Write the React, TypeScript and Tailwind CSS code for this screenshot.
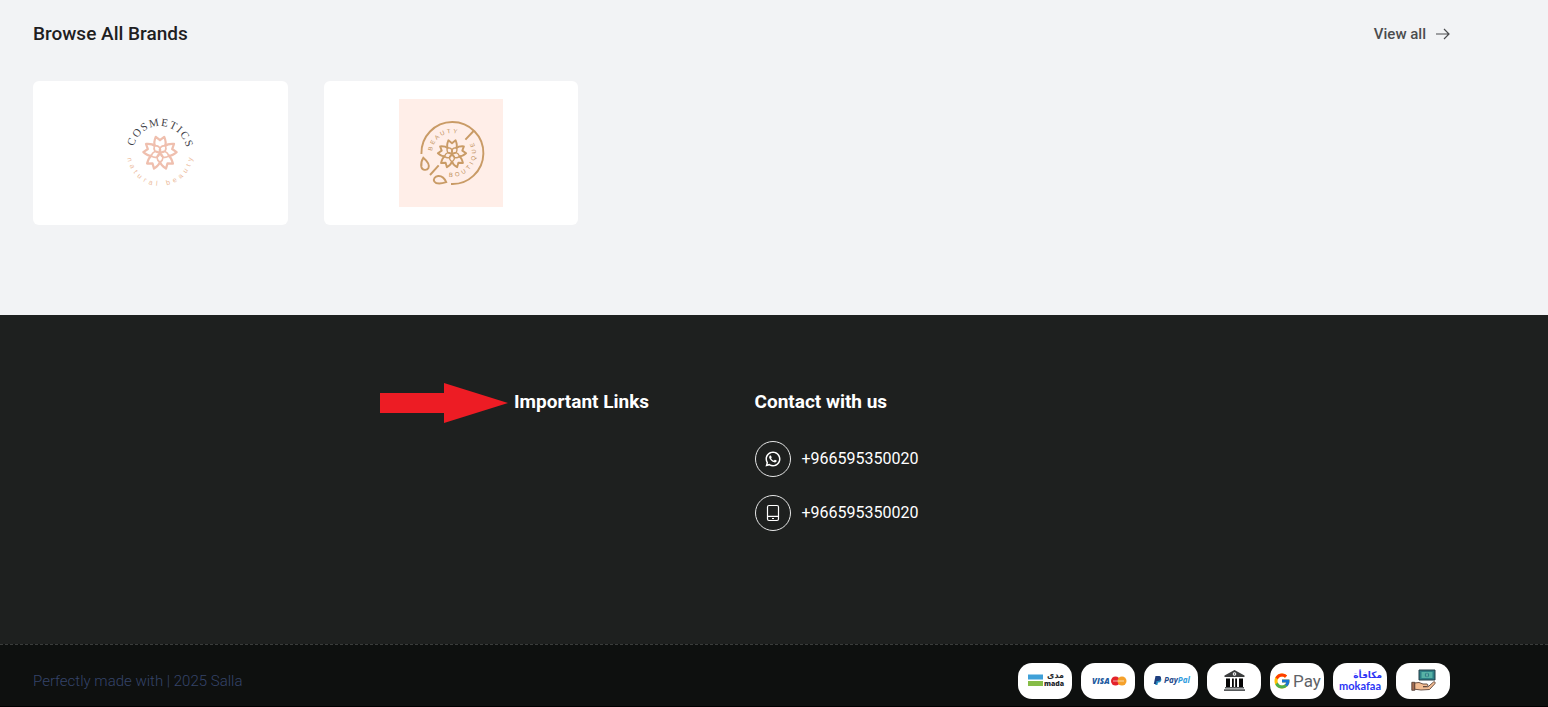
import type { ReactNode } from 'react';
import { FcGoogle } from 'react-icons/fc';
import { RiWhatsappLine } from 'react-icons/ri';

// Glyph advances in em, used to space letters evenly around a ring
const SERIF: Record<string, number> = { C: 0.67, O: 0.72, S: 0.56, M: 0.89, E: 0.61, T: 0.61, I: 0.33 };
const SANS: Record<string, number> = {
  n: 0.56, a: 0.56, t: 0.28, u: 0.56, r: 0.33, l: 0.22, b: 0.56, e: 0.56, y: 0.5, ' ': 0.28,
  B: 0.67, E: 0.67, A: 0.67, U: 0.72, T: 0.61, Y: 0.67, O: 0.78, I: 0.28, Q: 0.78,
};

interface RingTextProps {
  text: string;
  cx: number;
  cy: number;
  r: number;
  from: number;
  to: number;
  size: number;
  fill: string;
  family: string;
  advances: Record<string, number>;
  inward?: boolean;
}

// Text around a circle, angles in degrees clockwise from the top
function RingText({ text, cx, cy, r, from, to, size, fill, family, advances, inward }: RingTextProps) {
  const widths = text.split('').map((c) => advances[c] * size);
  const total = widths.reduce((sum, w) => sum + w, 0);
  const arc = (Math.abs(to - from) * Math.PI * r) / 180;
  const gap = (arc - total) / (text.length - 1);

  let pos = 0;
  const glyphs = widths.map((w) => {
    const angle = from + ((to - from) * (pos + w / 2)) / arc;
    pos += w + gap;
    const turn = inward ? angle - 180 : angle;
    const a = (angle * Math.PI) / 180;
    const t = (turn * Math.PI) / 180;
    return {
      x: cx + r * Math.sin(a) - (w / 2) * Math.cos(t),
      y: cy - r * Math.cos(a) - (w / 2) * Math.sin(t),
      turn,
    };
  });

  return (
    <text
      x={glyphs.map((g) => g.x.toFixed(2)).join(' ')}
      y={glyphs.map((g) => g.y.toFixed(2)).join(' ')}
      rotate={glyphs.map((g) => g.turn.toFixed(1)).join(' ')}
      fontSize={size}
      fontFamily={family}
      fill={fill}
    >
      {text}
    </text>
  );
}

function Flower({ cx, cy, scale, color }: { cx: number; cy: number; scale: number; color: string }) {
  return (
    <g
      transform={`translate(${cx} ${cy}) scale(${scale})`}
      fill="none"
      stroke={color}
      strokeWidth="2"
      strokeLinejoin="round"
    >
      {[0, 72, 144, 216, 288].map((angle) => (
        <g key={angle} transform={`rotate(${angle})`}>
          <path d="M-4.6 -6.4C-5.6 -8.6 -5 -11.4 -3.8 -14.4L0 -11.4L3.8 -14.4C5 -11.4 5.6 -8.6 4.6 -6.4" />
          <path d="M0 0C-3.6 -2.6 -3.4 -6 0 -8.2C3.4 -6 3.6 -2.6 0 0Z" strokeWidth="1.5" transform="rotate(36)" />
        </g>
      ))}
    </g>
  );
}

function CosmeticsLogo() {
  return (
    <svg viewBox="0 0 104 108" className="h-27 w-26" role="img" aria-label="Cosmetics natural beauty">
      <RingText text="COSMETICS" cx={52} cy={54} r={27} from={-76} to={78} size={11} fill="#3f4248" family="'Liberation Serif', serif" advances={SERIF} />
      <RingText text="natural beauty" cx={52} cy={54} r={33} from={261} to={99} size={7} fill="#ecb999" family="'Liberation Sans', sans-serif" advances={SANS} inward />
      <Flower cx={52} cy={54} scale={1.12} color="#efbfae" />
    </svg>
  );
}

function BoutiqueLogo() {
  return (
    <svg viewBox="0 0 104 108" className="h-27 w-26 bg-[#ffeee8]" role="img" aria-label="Beauty boutique">
      <g fill="none" stroke="#c99b66" strokeWidth="1.9">
        <path d="M22.4 55A31 31 0 1 1 52 85" />
        <path d="M74.6 32L66.4 40.6M39.7 66.3L31 76" />
        <path d="M24.3 58.8C22 62.5 21.8 65 22.4 68C23.2 71.4 28 71.8 29.4 69C30.5 66.5 29 62.8 24.3 58.8Z" />
        <path d="M47.2 83.2C45.5 79 42.5 76.8 39.2 77C35.8 77.3 34 80.2 35.3 82.4C37 85 42 84.8 47.2 83.2Z" />
      </g>
      <RingText text="BEAUTY" cx={53} cy={54} r={20} from={-84} to={14} size={6} fill="#c08f58" family="'Liberation Sans', sans-serif" advances={SANS} />
      <RingText text="BOUTIQUE" cx={53} cy={54} r={24} from={188} to={64} size={6} fill="#c08f58" family="'Liberation Sans', sans-serif" advances={SANS} inward />
      <Flower cx={53} cy={55} scale={0.95} color="#c99b66" />
    </svg>
  );
}

function ArrowIcon() {
  return (
    <svg viewBox="0 0 14 12" className="h-3 w-3.5" fill="none" stroke="currentColor" strokeWidth="1.2" aria-hidden="true">
      <path d="M0 6H13M8 1L13 6L8 11" />
    </svg>
  );
}

function PhoneIcon() {
  return (
    <svg viewBox="0 0 14 18" className="h-[18px] w-3.5" fill="none" stroke="currentColor" strokeWidth="1.2" aria-hidden="true">
      <rect x="1.5" y="1.5" width="11" height="15" rx="1.5" />
      <path d="M1.5 12.3H12.5M6 14.5H8" />
    </svg>
  );
}

function MadaLogo() {
  return (
    <svg viewBox="0 0 54 36" className="h-9 w-13.5" role="img" aria-label="mada">
      <rect x="10" y="11.5" width="15" height="5" fill="#3fa0d8" />
      <rect x="10" y="18" width="15" height="5" fill="#86bc47" />
      <text x="46" y="15" fontSize="8" fontWeight="700" fontFamily="'DejaVu Sans', sans-serif" fill="#24272b" textAnchor="end">مدى</text>
      <text x="26" y="23" fontSize="7" fontWeight="800" fontFamily="'Open Sans', sans-serif" fill="#24272b">mada</text>
    </svg>
  );
}

function CardsLogo() {
  return (
    <svg viewBox="0 0 54 36" className="h-9 w-13.5" role="img" aria-label="Visa and Mastercard">
      <text x="11" y="21" fontSize="8" fontWeight="800" fontStyle="italic" fontFamily="'Open Sans', sans-serif" fill="#1f5ba0">VISA</text>
      <circle cx="34.5" cy="18" r="4.5" fill="#e3232b" />
      <circle cx="41" cy="18" r="4.5" fill="#f5a12b" />
      <path d="M32 18H43" stroke="#fff" strokeWidth="1.2" opacity="0.5" />
    </svg>
  );
}

function PaypalLogo() {
  return (
    <svg viewBox="0 0 54 36" className="h-9 w-13.5" role="img" aria-label="PayPal">
      <path d="M13 14.5H16C18 15 18 18.8 15 19.6H14L13.4 22H11.2Z" fill="#2790c3" />
      <path d="M11.5 13H15.2C18.2 13.2 17.4 18 14 18H12.6L12 21H9.8Z" fill="#1f3f7f" />
      <text x="20" y="20" fontSize="8" fontWeight="700" fontStyle="italic" fontFamily="'Open Sans', sans-serif" fill="#1f4a8a">
        Pay<tspan fill="#2d9bdd">Pal</tspan>
      </text>
    </svg>
  );
}

function BankLogo() {
  return (
    <svg viewBox="0 0 54 36" className="h-9 w-13.5" role="img" aria-label="Bank transfer">
      <path d="M27.5 7L37.5 12.5V14H17.5V12.5Z" fill="#3b3d3e" />
      <circle cx="27.5" cy="11" r="1.8" fill="#fff" />
      <circle cx="27.5" cy="11" r="0.8" fill="#3b3d3e" />
      <path d="M19 15.5H23V24H19ZM25 15.5H26.8V24H25ZM28.2 15.5H30V24H28.2ZM32 15.5H36V24H32Z" fill="#050505" />
      <path d="M18 24H37V25.5H18ZM17 26.3H38V28H17Z" fill="#55585a" />
    </svg>
  );
}

function GooglePayLogo() {
  return (
    <span className="flex items-center gap-0.5" role="img" aria-label="Google Pay">
      <FcGoogle className="size-[18px]" />
      <span className="text-[17px] leading-none text-[#5f6368]">Pay</span>
    </span>
  );
}

function MokafaaLogo() {
  return (
    <svg viewBox="0 0 54 36" className="h-9 w-13.5" role="img" aria-label="mokafaa">
      <text x="49" y="15" fontSize="9" fontWeight="700" fontFamily="'DejaVu Sans', sans-serif" fill="#2b35f5" textAnchor="end">مكافأة</text>
      <text x="27" y="27" fontSize="11" fontWeight="700" fontFamily="Lato, sans-serif" fill="#2b35f5" textAnchor="middle">mokafaa</text>
    </svg>
  );
}

function CashLogo() {
  return (
    <svg viewBox="0 0 54 36" className="h-9 w-13.5" strokeLinejoin="round" role="img" aria-label="Cash on delivery">
      <rect x="23" y="7" width="16" height="10" fill="#2d7f86" stroke="#263f49" />
      <rect x="25.5" y="9" width="11" height="6" fill="#57b2a5" />
      <circle cx="31" cy="12" r="2.2" fill="#2d7f86" />
      <path d="M31 10.5V13.5" stroke="#b8e3d5" strokeWidth="0.8" />
      <path d="M18.5 20L23 19.5L27 21H31C32.5 21.5 32 23.2 30.5 23.5L27 23.7L32 23.8L37.5 19C39 18.4 39.7 19.7 38.8 20.8L33.5 26.5L25 27L18.5 26.2Z" fill="#f3bd93" stroke="#5a4238" strokeWidth="0.9" />
      <path d="M15.8 19.3H18.8V27.3H15.8Z" fill="#a36c51" stroke="#49362f" strokeWidth="0.8" />
    </svg>
  );
}

const brands = [
  { name: 'cosmetics', logo: <CosmeticsLogo /> },
  { name: 'boutique', logo: <BoutiqueLogo /> },
];

const contacts = [
  { name: 'WhatsApp', href: 'https://wa.me/966595350020', icon: <RiWhatsappLine className="size-[18px]" /> },
  { name: 'Mobile', href: 'tel:+966595350020', icon: <PhoneIcon /> },
];

const payments: { name: string; logo: ReactNode }[] = [
  { name: 'mada', logo: <MadaLogo /> },
  { name: 'cards', logo: <CardsLogo /> },
  { name: 'paypal', logo: <PaypalLogo /> },
  { name: 'bank', logo: <BankLogo /> },
  { name: 'google-pay', logo: <GooglePayLogo /> },
  { name: 'mokafaa', logo: <MokafaaLogo /> },
  { name: 'cod', logo: <CashLogo /> },
];

export default function App() {
  return (
    <div className="bg-[#f2f3f5] font-[Roboto,sans-serif]">
      <main className="pt-5 pr-[98px] pb-[90px] pl-[33px]">
        <div className="mb-[33px] flex items-center justify-between">
          <h2 className="text-[19px] leading-7 font-medium text-[#1e201f]">Browse All Brands</h2>
          <a href="#brands" className="flex items-center gap-2.5 text-[15px] leading-6 font-medium text-[#4b4c4e]">
            View all
            <ArrowIcon />
          </a>
        </div>
        <div className="grid grid-cols-5 gap-9">
          {brands.map((brand) => (
            <a key={brand.name} href={`#${brand.name}`} className="flex h-36 items-center justify-center rounded-md bg-white">
              {brand.logo}
            </a>
          ))}
        </div>
      </main>

      <footer className="bg-[#1e201f] text-white">
        <div className="grid grid-cols-6 gap-[26px] pt-[73px] pr-[98px] pb-[113px] pl-[33px]">
          <div className="relative col-start-3">
            <svg viewBox="0 0 128 40" className="absolute top-[-5px] right-full mr-1.5 h-10 w-32" aria-hidden="true">
              <path d="M0 10H64V0L128 20L64 40V30H0Z" fill="#ed1c24" />
            </svg>
            <h3 className="text-[19px] leading-7 font-bold">Important Links</h3>
          </div>
          <div className="col-span-2">
            <h3 className="text-[19px] leading-7 font-bold">Contact with us</h3>
            <ul className="mt-[25px] flex flex-col gap-[18px]">
              {contacts.map((contact) => (
                <li key={contact.name}>
                  <a href={contact.href} aria-label={contact.name} className="flex items-center gap-[11px] text-base">
                    <span className="flex size-9 items-center justify-center rounded-full border border-[#e5e6e6]">
                      {contact.icon}
                    </span>
                    <span>+966595350020</span>
                  </a>
                </li>
              ))}
            </ul>
          </div>
        </div>

        <div className="flex items-center justify-between border-t border-b border-t-[#3a3c3b] border-b-black bg-[#0e100f] pt-[18px] pr-[98px] pb-[7px] pl-[33px] [border-top-style:dashed]">
          <p className="text-[15px] leading-6 font-light text-[#35446a]">Perfectly made with | 2025 Salla</p>
          <ul className="flex gap-[9px]">
            {payments.map((payment) => (
              <li key={payment.name} className="flex h-9 w-13.5 items-center justify-center overflow-hidden rounded-[14px] bg-white">
                {payment.logo}
              </li>
            ))}
          </ul>
        </div>
      </footer>
    </div>
  );
}
